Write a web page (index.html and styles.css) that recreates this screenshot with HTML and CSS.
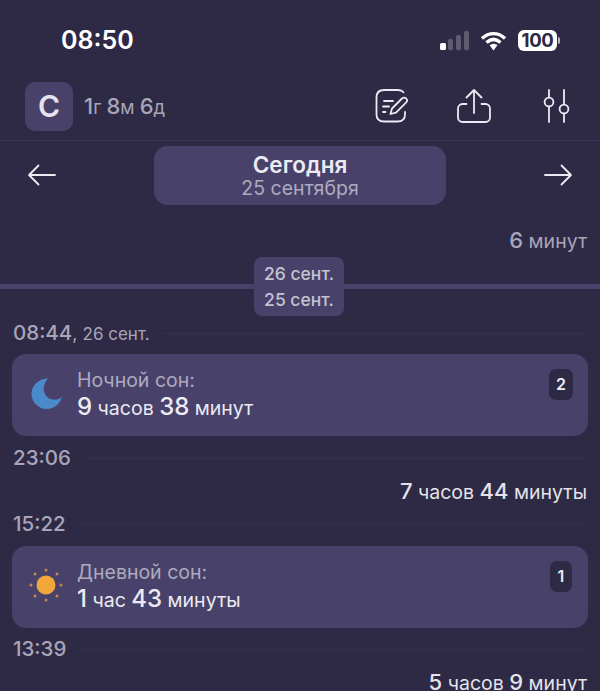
FILE: index.html
```html
<!DOCTYPE html>
<html lang="ru">
<head>
<meta charset="utf-8">
<title>Сегодня</title>
<link rel="stylesheet" href="styles.css">
</head>
<body>
<div class="screen">
  <div class="status">
    <span class="clock">08:50</span>
    <div class="status-icons">
      <svg class="signal" width="29" height="19" viewBox="0 0 29 19"><rect x="0" y="12" width="6" height="7" rx="1.5" fill="#fff"/><rect x="8" y="8" width="5" height="11" rx="1.5" fill="#5f5b70"/><rect x="16" y="4" width="5" height="15" rx="1.5" fill="#5f5b70"/><rect x="24" y="0" width="5" height="19" rx="1.5" fill="#5f5b70"/></svg>
      <svg class="wifi" width="27" height="20" viewBox="0 0 27 20"><path d="M2 7.5C9 1 18 1 25 7.5M6.5 11.5C11 7.5 16 7.5 20.5 11.5" fill="none" stroke="#fff" stroke-width="3.4"/><path d="M9.6 14.2C12 12.2 15 12.2 17.4 14.2L13.5 19.5Z" fill="#fff"/></svg>
      <div class="battery"><span class="battery-body">100</span><span class="battery-cap"></span></div>
    </div>
  </div>

  <header class="topbar">
    <div class="profile">
      <div class="avatar">С</div>
      <div class="age"><b>1</b>г <b>8</b>м <b>6</b>д</div>
    </div>
    <div class="actions">
      <svg class="icon" width="34" height="34" viewBox="0 0 34 34" fill="none" stroke="#eceaf2" stroke-width="1.8" stroke-linecap="round" stroke-linejoin="round"><path d="M28.5 3.2C27.2 1.6 25.5 1 23 1H9C4 1 1.5 3.5 1.5 8.5V25.5C1.5 30.5 4 32.5 9 32.5H22.5C27 32.5 30 30.5 30 25.5V23"/><path d="M9 12H18M8 17.5H14M8 23H10.5"/><path d="M15.5 25L17 19.5L27 9.5C28.2 8.2 30 8.2 31.2 9.5C32.4 10.8 32.2 12.3 31.2 13.4L21 23.6Z"/></svg>
      <svg class="icon" width="34" height="34" viewBox="0 0 34 34" fill="none" stroke="#eceaf2" stroke-width="1.8" stroke-linecap="round" stroke-linejoin="round"><path d="M9.5 15H5.5C3 15 1 17 1 19.5V28.5C1 31 3 33 5.5 33H28.5C31 33 33 31 33 28.5V19.5C33 17 31 15 28.5 15H24.5"/><path d="M17 24V1M9.5 8.5L17 1L24.5 8.5"/></svg>
      <svg class="icon sliders" width="28" height="34" viewBox="0 0 28 34" fill="none" stroke="#eceaf2" stroke-width="1.8" stroke-linecap="round"><path d="M6 1V8M6 18V33M21 1V15M21 25V33"/><circle cx="6" cy="13" r="4.4"/><circle cx="21" cy="20" r="4.4"/></svg>
    </div>
  </header>

  <nav class="datenav">
    <svg class="arrow" width="30" height="22" viewBox="0 0 30 22" fill="none" stroke="#eceaf2" stroke-width="1.8" stroke-linecap="round" stroke-linejoin="round"><path d="M28 11H2M11.5 1.5L2 11L11.5 20.5"/></svg>
    <div class="date-pill">
      <div class="date-title">Сегодня</div>
      <div class="date-sub">25 сентября</div>
    </div>
    <svg class="arrow" width="30" height="22" viewBox="0 0 30 22" fill="none" stroke="#eceaf2" stroke-width="1.8" stroke-linecap="round" stroke-linejoin="round"><path d="M2 11H28M18.5 1.5L28 11L18.5 20.5"/></svg>
  </nav>

  <main class="timeline">
    <div class="gap gap-first"><span class="duration dim"><b>6</b> минут</span></div>

    <div class="daybreak">
      <div class="day-pill"><span>26 сент.</span><span>25 сент.</span></div>
    </div>

    <div class="time-row time-row-first"><span class="time"><b>08:44</b>, <small>26 сент.</small></span><i class="rule"></i></div>

    <section class="card">
      <svg class="card-icon" width="34" height="34" viewBox="0 0 34 34"><path d="M19 2.5C10.5 2.5 2.5 8.5 2.5 18C2.5 26 9.5 33 17.5 33C24.5 33 31 28.5 33 20.5C30 24 25.5 24.5 21.5 23C16 20.5 14 15 15 10.5C15.5 7.5 17 4.5 19 2.5Z" fill="#4a8acb"/></svg>
      <div class="card-text">
        <div class="card-label">Ночной сон:</div>
        <div class="card-value"><b>9</b> часов <b>38</b> минут</div>
      </div>
      <span class="badge">2</span>
    </section>

    <div class="time-row"><span class="time"><b>23:06</b></span><i class="rule"></i></div>
    <div class="gap"><span class="duration"><b>7</b> часов <b>44</b> минуты</span></div>
    <div class="time-row"><span class="time"><b>15:22</b></span><i class="rule"></i></div>

    <section class="card card-last">
      <svg class="card-icon sun" width="36" height="36" viewBox="0 0 36 36"><circle cx="18" cy="18" r="9.5" fill="#f2a73b"/><g fill="#c08a50"><circle cx="18" cy="3" r="1.5"/><circle cx="18" cy="33" r="1.5"/><circle cx="3" cy="18" r="1.5"/><circle cx="33" cy="18" r="1.5"/><circle cx="7" cy="7" r="1.5"/><circle cx="29" cy="7" r="1.5"/><circle cx="7" cy="29" r="1.5"/><circle cx="29" cy="29" r="1.5"/></g></svg>
      <div class="card-text">
        <div class="card-label">Дневной сон:</div>
        <div class="card-value"><b>1</b> час <b>43</b> минуты</div>
      </div>
      <span class="badge badge-narrow">1</span>
    </section>

    <div class="time-row"><span class="time"><b>13:39</b></span><i class="rule"></i></div>
    <div class="gap"><span class="duration"><b>5</b> часов <b>9</b> минут</span></div>
  </main>
</div>
</body>
</html>
```

FILE: styles.css
```css
* { box-sizing: border-box; }
html, body { margin: 0; padding: 0; }
body {
  width: 600px;
  height: 691px;
  overflow: hidden;
  background: #2e2a45;
  color: #eceaf2;
  font-family: Inter, "Noto Sans", sans-serif;
}
.screen { width: 600px; height: 691px; overflow: hidden; }

.status {
  height: 81px;
  display: flex;
  justify-content: space-between;
  align-items: flex-start;
  padding: 26px 40px 0 61px;
}
.clock { font-size: 25px; font-weight: 600; line-height: 28px; color: #fff; }
.status-icons { display: flex; align-items: center; gap: 11px; padding-top: 4px; }
.signal { display: block; }
.wifi { display: block; }
.battery { display: flex; align-items: center; gap: 1px; }
.battery-body {
  width: 39px;
  height: 21px;
  background: #fff;
  border-radius: 6px;
  color: #2e2a45;
  font-size: 18.5px;
  font-weight: 700;
  line-height: 21px;
  text-align: center;
  letter-spacing: -0.3px;
}
.battery-cap { width: 2px; height: 7px; background: #b9b7c4; border-radius: 0 2px 2px 0; }

.topbar {
  height: 60px;
  display: flex;
  justify-content: space-between;
  padding: 1px 29px 0 25px;
  border-bottom: 1px solid #3b3654;
}
.profile { display: flex; align-items: flex-start; gap: 10px; }
.avatar {
  width: 48px;
  height: 49px;
  border-radius: 10px;
  background: #48426a;
  color: #e6e3ef;
  font-size: 30px;
  font-weight: 600;
  line-height: 49px;
  text-align: center;
}
.age { font-size: 18.5px; line-height: 49px; color: #a9a5b9; margin-left: 1px; }
.age b { font-size: 22px; font-weight: 500; }
.actions { display: flex; align-items: flex-start; gap: 48px; padding-top: 7px; }
.icon { display: block; }
.sliders { margin-left: 4px; }

.datenav {
  height: 65px;
  padding: 5px 27px 0;
  display: flex;
  justify-content: space-between;
  align-items: flex-start;
}
.arrow { display: block; margin-top: 18px; }
.date-pill {
  width: 292px;
  height: 59px;
  border-radius: 14px;
  background: #48426a;
  text-align: center;
  padding-top: 6px;
}
.date-title { font-size: 22.5px; font-weight: 600; line-height: 25px; color: #eceaf2; }
.date-sub { font-size: 19.5px; line-height: 22px; color: #aeaac0; }

.timeline { display: flex; flex-direction: column; }
.gap {
  height: 44px;
  padding-right: 13px;
  display: flex;
  justify-content: flex-end;
  align-items: center;
  flex: none;
}
.gap-first { height: 51px; align-items: flex-end; padding-bottom: 4px; }
.duration { font-size: 19.5px; line-height: 24px; color: #e4e2ea; white-space: nowrap; }
.duration b { font-size: 22px; font-weight: 500; }
.duration.dim { color: #a9a5b9; }

.daybreak {
  height: 59px;
  flex: none;
  display: flex;
  justify-content: center;
  align-items: center;
  background: linear-gradient(#48426a, #48426a) center / 100% 5px no-repeat;
}
.day-pill {
  width: 90px;
  height: 59px;
  margin-right: 2px;
  border-radius: 8px;
  background: #48426a;
  display: flex;
  flex-direction: column;
  justify-content: center;
  align-items: center;
  gap: 5px;
  font-size: 17.5px;
  font-weight: 500;
  line-height: 21px;
  color: #c5c2d2;
}

.time-row {
  height: 22px;
  flex: none;
  padding: 0 12px 0 13px;
  display: flex;
  align-items: center;
  gap: 13px;
}
.time-row-first { margin-top: 6px; margin-bottom: 10px; }
.time { font-size: 18px; line-height: 22px; color: #a9a5b9; white-space: nowrap; }
.time b { font-size: 20.5px; font-weight: 500; }
.time small { font-size: 17px; }
.rule { flex: 1; height: 1px; background: #353050; }

.card {
  position: relative;
  flex: none;
  height: 82px;
  margin: 0 12px 11px;
  border-radius: 14px;
  background: #48426a;
  display: flex;
  align-items: center;
  padding-left: 17px;
  gap: 13px;
}
.time-row + .card { margin-top: 11px; }
.time-row-first + .card { margin-top: 0; }
.card-last { margin-bottom: 10px; }
.card-icon { display: block; flex: none; margin-top: -4px; }
.sun { margin-left: -1px; margin-right: -1px; }
.card-text { padding-left: 1px; }
.card-label { font-size: 19.5px; line-height: 25px; color: #aeaac0; }
.card-value { font-size: 19.5px; line-height: 27px; color: #eceaf2; }
.card-value b { font-size: 24px; font-weight: 500; }
.badge {
  position: absolute;
  top: 15px;
  right: 15px;
  width: 24px;
  height: 31px;
  border-radius: 7px;
  background: #2e2a45;
  color: #eceaf2;
  font-size: 16px;
  font-weight: 600;
  line-height: 30px;
  text-align: center;
}
.badge-narrow { width: 22px; right: 16px; }
```
